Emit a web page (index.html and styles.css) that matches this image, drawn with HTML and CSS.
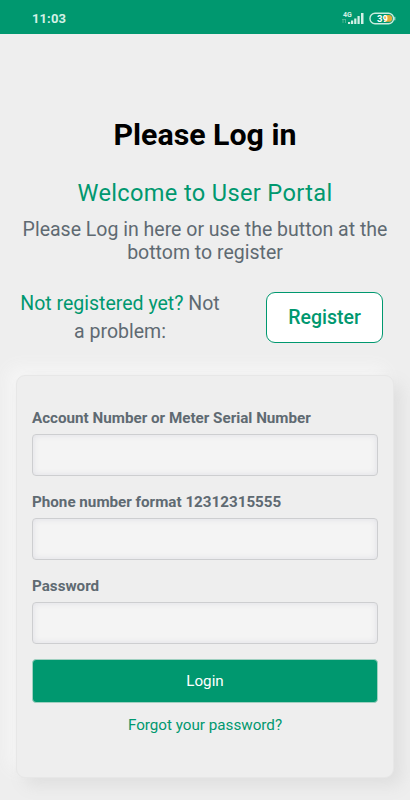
FILE: index.html
```html
<!DOCTYPE html>
<html lang="en">
  <head>
    <meta charset="UTF-8" />
    <meta name="viewport" content="width=device-width, initial-scale=1.0" />
    <title>User Portal</title>
    <link rel="stylesheet" href="styles.css">
  </head>
  <body>
    <header class="status-bar">
      <span class="clock">11:03</span>
      <div class="status-icons">
        <svg class="signal" viewBox="0 0 22 14" xmlns="http://www.w3.org/2000/svg">
          <text x="1" y="5.500" class="network">4G</text>
          <path d="M1 8.500v3.500M3.500 12V8.500M0 8.500h4" stroke="#5dbb9d" stroke-width="0.8" fill="none" />
          <path d="M6 13v-2h2.200v2zM9 13V9.500h2.200V13zM12.200 13V7.500h2.200V13zM15.500 13V5h2.200v8zM19 13V2h2.500v11z" fill="#d4f0e6" />
        </svg>
        <svg class="battery" viewBox="0 0 27 13" xmlns="http://www.w3.org/2000/svg">
          <rect x="1" y="1.200" width="23.500" height="10.500" rx="5" fill="none" stroke="#c9ecdf" stroke-width="1.400" />
          <path d="M15 3.100h4.800a3.300 3.300 0 0 1 0 6.700H15z" fill="#e5a93a" />
          <path d="M25.800 4.800v3.500" stroke="#c9ecdf" stroke-width="1" />
          <text x="8" y="9.700" class="level">39</text>
        </svg>
      </div>
    </header>

    <main class="page">
      <h1>Please Log in</h1>
      <h2>Welcome to User Portal</h2>
      <p class="intro">Please Log in here or use the button at the bottom to register</p>

      <div class="register-row">
        <p class="register-text"><span class="green">Not registered yet?</span> Not a problem:</p>
        <button type="button" class="register-btn">Register</button>
      </div>

      <form class="login-card">
        <label for="account">Account Number or Meter Serial Number</label>
        <input type="text" id="account" />
        <label for="phone">Phone number format 12312315555</label>
        <input type="tel" id="phone" />
        <label for="password">Password</label>
        <input type="password" id="password" />
        <button type="button" class="login-btn">Login</button>
        <a class="forgot">Forgot your password?</a>
      </form>
    </main>
  </body>
</html>
```
FILE: styles.css
```css
* {
  box-sizing: border-box;
}

body {
  margin: 0;
  height: 800px;
  font-family: Roboto, sans-serif;
  background-color: #eeeeee;
  color: #5f6a72;
  overflow: hidden;
}

.status-bar {
  display: flex;
  justify-content: space-between;
  align-items: center;
  height: 34px;
  padding: 2px 14px 0 32px;
  background-color: #00986f;
}

.clock {
  font-size: 13px;
  font-weight: 700;
  letter-spacing: 0.1px;
  color: #d4f0e6;
}

.status-icons {
  display: flex;
  align-items: center;
  gap: 5px;
}

.signal {
  width: 22px;
  height: 14px;
  overflow: visible;
}

.network {
  font-size: 7px;
  font-weight: 700;
  fill: #d4f0e6;
}

.battery {
  width: 27px;
  height: 13px;
}

.level {
  font-size: 9.5px;
  font-weight: 700;
  fill: #ffffff;
}

.page {
  text-align: center;
}

h1 {
  margin: 82px 0 0;
  font-size: 30.3px;
  line-height: 38px;
  font-weight: 700;
  color: #000000;
}

h2 {
  margin: 24px 0 0;
  font-size: 23.6px;
  line-height: 30px;
  font-weight: 400;
  letter-spacing: 0.35px;
  color: #00986f;
}

.intro {
  margin: 10px 16px 0;
  font-size: 19.5px;
  line-height: 23px;
}

.register-row {
  display: flex;
  align-items: flex-start;
  justify-content: space-between;
  margin-top: 26px;
  padding: 0 27px 0 16px;
}

.register-text {
  width: 208px;
  margin: 0;
  font-size: 19.5px;
  line-height: 28px;
}

.green {
  color: #00986f;
}

.register-btn {
  width: 117px;
  height: 51px;
  margin-top: 2px;
  padding: 0;
  border: 1px solid #00986f;
  border-radius: 9px;
  background-color: #ffffff;
  font-family: inherit;
  font-size: 19.5px;
  font-weight: 500;
  color: #00986f;
}

.login-card {
  display: flex;
  flex-direction: column;
  height: 403px;
  margin: 29px 16px 0;
  padding: 32px 15px 0;
  border: 1px solid #e7e7e7;
  border-radius: 9px;
  background-color: #eeeeee;
  box-shadow: 8px 8px 16px #dfdfdf, -8px -8px 16px #f6f6f6;
  text-align: left;
}

label {
  margin-bottom: 6px;
  font-size: 15.2px;
  line-height: 20px;
  font-weight: 700;
}

input {
  height: 42px;
  margin-bottom: 16px;
  border: 1px solid #cdced0;
  border-radius: 4px;
  background-color: #f4f4f4;
  box-shadow: inset 0 0 6px #dedee4;
}

.login-btn {
  height: 44px;
  margin-top: -1px;
  border: 1px solid #9fd0c0;
  border-radius: 4px;
  background-color: #00986f;
  font-family: inherit;
  font-size: 15.2px;
  color: #ffffff;
}

.forgot {
  margin-top: 12px;
  font-size: 15.2px;
  line-height: 20px;
  text-align: center;
  color: #00986f;
}
```
